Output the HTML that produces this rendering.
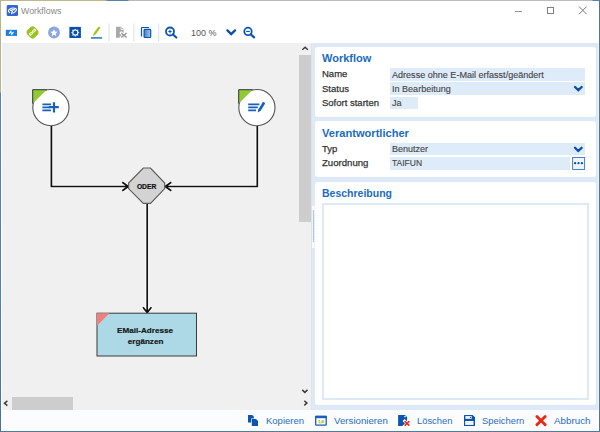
<!DOCTYPE html>
<html><head><meta charset="utf-8">
<style>
*{box-sizing:border-box;margin:0;padding:0}
html,body{width:600px;height:432px;overflow:hidden;background:#fff}
body{position:relative;font-family:"Liberation Sans",sans-serif;color:#333}
.abs{position:absolute}
.t{position:absolute;white-space:nowrap;line-height:1}
.lb{-webkit-text-stroke:0.25px currentColor}
.fv{-webkit-text-stroke:0.12px currentColor}
</style></head><body>

<!-- window borders -->
<div class="abs" style="left:0;top:0;width:600px;height:1px;background:linear-gradient(90deg,#bdb98f 0,#bdb98f 106px,#5b81a9 107px,#5b81a9 128px,#b9b9b9 129px,#bdbdbd 592px,#5b81a9 593px)"></div>
<div class="abs" style="left:0;top:0;width:1px;height:432px;background:linear-gradient(180deg,#b9b68e 0,#b6b48e 92px,#5c84ab 93px,#5580a8 300px,#4d7195 100%)"></div>
<div class="abs" style="left:598px;top:43px;width:1px;height:367px;background:#eef6fd"></div><div class="abs" style="left:599px;top:0;width:1px;height:432px;background:#517797"></div>
<div class="abs" style="left:0;top:431px;width:600px;height:1px;background:#55799a"></div>

<!-- title bar -->
<div class="abs" style="left:7px;top:5px;width:11px;height:11px;background:#3a64cf;border-radius:2px"></div>
<div class="t" style="left:21px;top:7.4px;font-size:8.8px;color:#8a8a8a">Workflows</div>
<div class="abs" style="left:514.8px;top:10.5px;width:7.4px;height:1.2px;background:#959595"></div>
<div class="abs" style="left:547px;top:7px;width:7px;height:7px;border:1px solid #808080"></div>

<!-- canvas -->
<div class="abs" style="left:2px;top:43px;width:310px;height:367px;background:#f0f0f0"></div>

<!-- canvas drawing -->
<svg class="abs" style="left:0;top:0" width="600" height="432" viewBox="0 0 600 432">
<g fill="none" stroke-linecap="butt" stroke-linejoin="miter">
 <g stroke="#fff" stroke-width="3.6" opacity="0.9">
  <path d="M51.4,125.5V186.5H128M122.3,182.2L128.3,186.5L122.3,190.8"/>
  <path d="M257.3,125.5V186.5H165M171.3,182.2L165.2,186.5L171.3,190.8"/>
  <path d="M147.2,203.5V312.5M143,307.2L147.2,312.6L151.4,307.2"/>
 </g>
 <g stroke="#111" stroke-width="1.7">
  <path d="M51.4,125.5V186.5H128M122.3,182.2L128.3,186.5L122.3,190.8"/>
  <path d="M257.3,125.5V186.5H165M171.3,182.2L165.2,186.5L171.3,190.8"/>
  <path d="M147.2,203.5V312.5M143,307.2L147.2,312.6L151.4,307.2"/>
 </g>
</g>
<!-- left circle -->
<circle cx="50.9" cy="107.6" r="18.1" fill="#fff" stroke="#555" stroke-width="1.1"/>
<path d="M32.7,89.7H46.8L32.7,103.6Z" fill="#8fca34"/>
<path d="M32.7,103.6V89.7H46.8" fill="none" stroke="#333" stroke-width="1"/>
<g stroke="#1760bd" fill="none">
 <path d="M42.4,104.3H51M42.4,107.3H49.5M42.4,110.4H51" stroke-width="1.7"/>
 <path d="M54,102.2V112.4M48.8,107.2H58.8" stroke-width="2.2"/>
</g>
<!-- right circle -->
<circle cx="256.9" cy="107.6" r="18.1" fill="#fff" stroke="#555" stroke-width="1.1"/>
<path d="M238.7,89.7H252.6L238.7,103.6Z" fill="#8fca34"/>
<path d="M238.7,103.6V89.7H252.6" fill="none" stroke="#333" stroke-width="1"/>
<g stroke="#1760bd" fill="none">
 <path d="M248.2,104.3H259.4M248.2,107.4H257.8M248.2,110.4H256" stroke-width="1.7"/>
</g>
<path d="M257.6,112.6L258.4,109.3L262.9,102.1Q264.2,101.9 265.1,103.5L260.7,110.7Z" fill="#1760bd"/>
<!-- octagon -->
<path d="M143.3,168H150.5L164.7,183V188.6L150.5,203.3H143.3L128.6,188.6V183Z" fill="#d3d3d3" stroke="#5e5e5e" stroke-width="1.2"/>
<text x="146.6" y="188.9" font-family="Liberation Sans" font-weight="bold" font-size="6.7" text-anchor="middle" fill="#111" stroke="#111" stroke-width="0.2">ODER</text>
<!-- rect -->
<rect x="97" y="313.2" width="99.5" height="42.8" fill="#add8e6" stroke="#3a3a3a" stroke-width="1"/>
<path d="M97,313.2H109.5L97,325.7Z" fill="#f08080"/>
<text x="145" y="333" font-family="Liberation Sans" font-weight="bold" font-size="8.1" text-anchor="middle" fill="#151515" stroke="#151515" stroke-width="0.18">EMail-Adresse</text>
<text x="145.6" y="343.8" font-family="Liberation Sans" font-weight="bold" font-size="8.1" text-anchor="middle" fill="#151515" stroke="#151515" stroke-width="0.18">ergänzen</text>
</svg>

<!-- v scrollbar thumb -->
<div class="abs" style="left:299px;top:55px;width:12px;height:166.6px;background:#cdcdcd"></div>
<div class="abs" style="left:311px;top:43px;width:1px;height:367px;background:#dde3e9"></div>
<!-- h scrollbar thumb -->
<div class="abs" style="left:12px;top:397px;width:61px;height:12.5px;background:#cdcdcd"></div>

<!-- right panel -->
<div class="abs" style="left:312px;top:43px;width:286px;height:367px;background:#dde9f7"></div>
<div class="abs" style="left:315px;top:47px;width:281px;height:69.6px;background:#fff;border-radius:3px"></div>
<div class="abs" style="left:315px;top:121px;width:281px;height:56px;background:#fff;border-radius:3px"></div>
<div class="abs" style="left:315px;top:182px;width:281px;height:223px;background:#fff;border-radius:3px"></div>

<div class="t" style="left:322px;top:53.2px;font-size:11px;font-weight:bold;color:#1b6cc0">Workflow</div>
<div class="t lb" style="left:322px;top:69.4px;font-size:9.5px;color:#333">Name</div>
<div class="t lb" style="left:322px;top:83.6px;font-size:9.5px;color:#333">Status</div>
<div class="t lb" style="left:322px;top:97.7px;font-size:9.5px;color:#333">Sofort starten</div>
<div class="abs" style="left:390px;top:68.1px;width:195px;height:12.5px;background:#deebf8"></div>
<div class="abs" style="left:390px;top:82.1px;width:195px;height:12.5px;background:#deebf8"></div>
<div class="abs" style="left:390px;top:96.9px;width:28px;height:12.1px;background:#deebf8"></div>
<div class="t fv" style="left:392px;top:70.8px;font-size:9.05px;color:#444">Adresse ohne E-Mail erfasst/geändert</div>
<div class="t fv" style="left:392px;top:84.8px;font-size:9.05px;color:#444">In Bearbeitung</div>
<div class="t fv" style="left:392px;top:98.9px;font-size:9.05px;color:#444">Ja</div>

<div class="t" style="left:322px;top:127.9px;font-size:11.1px;font-weight:bold;color:#1b6cc0">Verantwortlicher</div>
<div class="t lb" style="left:322px;top:144.4px;font-size:9.5px;color:#333">Typ</div>
<div class="t lb" style="left:322px;top:158.4px;font-size:9.6px;color:#333">Zuordnung</div>
<div class="abs" style="left:390px;top:143.1px;width:195px;height:12.3px;background:#deebf8"></div>
<div class="abs" style="left:390px;top:157px;width:180.3px;height:12.7px;background:#deebf8"></div>
<div class="t fv" style="left:392px;top:145px;font-size:9px;color:#444">Benutzer</div>
<div class="t fv" style="left:392px;top:158.9px;font-size:8.5px;color:#444">TAIFUN</div>

<div class="t" style="left:322px;top:187.6px;font-size:10.5px;font-weight:bold;color:#1b6cc0">Beschreibung</div>
<div class="abs" style="left:321.5px;top:203px;width:267.3px;height:197px;border:2px solid #dde9f7;background:#fff"></div>


<!-- scroll arrows, dropdowns, grip -->
<svg class="abs" style="left:0;top:0" width="600" height="432" viewBox="0 0 600 432">
 <g fill="none" stroke="#3c3c3c" stroke-width="1.5" stroke-linejoin="miter">
  <path d="M302.4,49.8L305.1,47.2L307.8,49.8"/>
  <path d="M302.3,389.9L304.8,392.4L307.5,389.9"/>
  <path d="M304.3,400.8L306.9,403.1L304.3,405.4"/>
  <path d="M7.4,400.8L4.5,403.2L7.4,405.6"/>
 </g>
 <rect x="312.2" y="206" width="2.2" height="42" fill="#fff"/>
 <g fill="#4a80c8">
  <rect x="312.9" y="210.6" width="1" height="1"/><rect x="312.9" y="212.6" width="1" height="1"/>
  <rect x="312.9" y="214.6" width="1" height="1"/><rect x="312.9" y="216.6" width="1" height="1"/>
  <rect x="312.9" y="218.6" width="1" height="1"/><rect x="312.9" y="220.6" width="1" height="1"/>
  <rect x="312.9" y="222.6" width="1" height="1"/><rect x="312.9" y="224.6" width="1" height="1"/>
  <rect x="312.9" y="226.6" width="1" height="1"/><rect x="312.9" y="228.6" width="1" height="1"/>
  <rect x="312.9" y="230.6" width="1" height="1"/><rect x="312.9" y="232.6" width="1" height="1"/>
  <rect x="312.9" y="234.6" width="1" height="1"/><rect x="312.9" y="236.6" width="1" height="1"/>
  <rect x="312.9" y="238.6" width="1" height="1"/><rect x="312.9" y="240.6" width="1" height="1"/>
 </g>
 <g fill="none" stroke="#0a4fa6" stroke-width="2.3" stroke-linecap="round">
  <path d="M575,87L578.3,90.2L581.7,87"/>
  <path d="M575,147.8L578.2,151L581.6,147.8"/>
 </g>
 <rect x="572.6" y="157.5" width="12" height="12" fill="#edf4fc" stroke="#3f7cc6" stroke-width="0.95"/>
 <g fill="#0a4fa6"><circle cx="575.1" cy="163.2" r="1.15"/><circle cx="578.5" cy="163.2" r="1.15"/><circle cx="581.9" cy="163.2" r="1.15"/></g>
</svg>

<!-- bottom bar -->
<div class="abs" style="left:1px;top:410px;width:597px;height:21px;background:#fbfcfe"></div>
<!-- toolbar & title icons -->
<svg class="abs" style="left:0;top:0" width="600" height="45" viewBox="0 0 600 45">
 <!-- app icon -->
 <rect x="6.7" y="4.9" width="11.3" height="11.1" rx="1.6" fill="#3566d0"/>
 <g fill="none" stroke="#fff" stroke-linecap="round">
  <path d="M9.6,12.6C7.6,11.6 8.2,9 11.6,8.2C14.6,7.6 17.2,8.6 16.2,10.6C15.6,11.8 14.4,12.6 13.2,13" stroke-width="1.15"/>
  <path d="M10.6,10.4L14.4,9.6M12.6,10L11.7,13.6" stroke-width="1.3"/>
 </g>
 <!-- close X -->
 <path d="M579,6.6L586.6,14.2M586.6,6.6L579,14.2" stroke="#777" stroke-width="1"/>

 <!-- icon1 blue pulse -->
 <rect x="5.8" y="29.8" width="11.2" height="6.1" fill="#1a80e0"/>
 <path d="M9.4,33.4L11.1,31.2M11.5,34.6L13.2,32.3M10.6,32.6L12,33.2" fill="none" stroke="#fff" stroke-width="1.1" stroke-linecap="round"/>
 <!-- icon2 green diamond -->
 <path d="M31.2,27.2Q32.55,26.3 33.9,27.2L37.6,30.9Q38.5,32.4 37.6,33.9L33.9,37.6Q32.55,38.5 31.2,37.6L27.5,33.9Q26.6,32.4 27.5,30.9Z" fill="#9bc220" stroke="#9bc220" stroke-width="1.2" stroke-linejoin="round"/>
 <g fill="none" stroke="#fff" stroke-width="1">
  <rect x="30.1" y="32" width="1.8" height="3.4" rx="0.9" transform="rotate(45 31 33.7)"/>
  <rect x="33.1" y="29.1" width="1.8" height="3.4" rx="0.9" transform="rotate(45 34 30.8)"/>
 </g>
 <!-- icon3 star circle -->
 <circle cx="54" cy="32.5" r="5.9" fill="#89a6de"/>
 <path d="M54.00,29.00L55.03,31.58L57.80,31.76L55.66,33.54L56.35,36.24L54.00,34.75L51.65,36.24L52.34,33.54L50.20,31.76L52.97,31.58Z" fill="#fff"/>
 <!-- icon4 gear -->
 <rect x="69.4" y="26.9" width="11.5" height="11.1" fill="#0a4fa8"/>
 <circle cx="75.3" cy="32.6" r="2.55" fill="none" stroke="#fff" stroke-width="1.1"/>
 <g fill="#fff"><circle cx="78.65" cy="32.60" r="0.62"/><circle cx="77.67" cy="34.97" r="0.62"/><circle cx="75.30" cy="35.95" r="0.62"/><circle cx="72.93" cy="34.97" r="0.62"/><circle cx="71.95" cy="32.60" r="0.62"/><circle cx="72.93" cy="30.23" r="0.62"/><circle cx="75.30" cy="29.25" r="0.62"/><circle cx="77.67" cy="30.23" r="0.62"/></g>
 <!-- icon5 pencil -->
 <path d="M92.8,36.3L93.7,33.2L98.1,27.0Q99.4,26.4 100.4,27.7L96.1,34.0Z" fill="#a5c816"/>
 <rect x="90.9" y="37" width="11.1" height="1.8" fill="#4a88d0"/>
 <!-- separators -->
 <rect x="108.4" y="23.5" width="1.3" height="18.2" fill="#e1e8f0"/>
 <rect x="133.2" y="23.5" width="1.3" height="18.2" fill="#e1e8f0"/>
 <rect x="158" y="23.5" width="1.3" height="18.2" fill="#e1e8f0"/>
 <!-- icon6 disabled doc -->
 <path d="M116,26.8H121.2L123.6,29.3V37.8H116Z" fill="#a9a9a9"/>
 <path d="M121,26.8V29.5H123.8" fill="none" stroke="#fff" stroke-width="0.7"/>
 <path d="M120.2,32.2L127.5,38.2M127.5,32.2L120.2,38.2" stroke="#fff" stroke-width="2.8"/>
 <path d="M121.2,33L126.6,37.4M126.6,33L121.2,37.4" stroke="#9a9a9a" stroke-width="1.4"/>
 <!-- icon7 copy -->
 <path d="M149,27.5H142.2Q141.5,27.5 141.5,28.2V36.6" fill="none" stroke="#0a55b0" stroke-width="1.2"/>
 <defs><linearGradient id="cg" x1="0" x2="1"><stop offset="0" stop-color="#3f7fc8"/><stop offset="1" stop-color="#a9c6ea"/></linearGradient></defs>
 <rect x="144.1" y="29.4" width="6.6" height="8.1" rx="0.8" fill="url(#cg)" stroke="#0a55b0" stroke-width="1.2"/>
 <!-- zoom in -->
 <circle cx="170" cy="31.5" r="4" fill="none" stroke="#0b55ad" stroke-width="1.8"/>
 <path d="M168.3,31.5H171.7M170,29.8V33.2" stroke="#0b55ad" stroke-width="1.1"/>
 <path d="M173,34.5L176.3,37.5" stroke="#0b55ad" stroke-width="2.2" stroke-linecap="round"/>
 <!-- chevron -->
 <path d="M227.4,30.4L231.2,34.1L235,30.4" fill="none" stroke="#0a4fa6" stroke-width="2.3" stroke-linecap="round"/>
 <!-- zoom out -->
 <circle cx="248" cy="31.4" r="3.7" fill="none" stroke="#0b55ad" stroke-width="1.8"/>
 <path d="M246.2,31.4H249.8" stroke="#0b55ad" stroke-width="1.2"/>
 <path d="M250.8,34.4L254.1,37.3" stroke="#0b55ad" stroke-width="2.2" stroke-linecap="round"/>
</svg>
<div class="t" style="left:191px;top:28.6px;font-size:9px;color:#555">100 %</div>

<!-- bottom icons -->
<svg class="abs" style="left:0;top:405px" width="600" height="27" viewBox="0 405 600 27">
 <!-- kopieren -->
 <path d="M248,414.9H252.2L253.8,416.5V422.4H248Z" fill="#0a55b0"/>
 <path d="M251.2,418.4H255.8L258.6,421.2V426.6H251.2Z" fill="#fff"/>
 <path d="M251.8,418.9H256L258,420.9V426H251.8Z" fill="#0a55b0"/>
 <!-- versionieren -->
 <rect x="315.7" y="416.4" width="10.5" height="8.8" rx="0.6" fill="#fff" stroke="#1a5cb8" stroke-width="1.3"/>
 <rect x="315.1" y="415.8" width="11.7" height="2.4" fill="#1a5cb8"/>
 <text x="321" y="423.2" font-family="Liberation Sans" font-weight="bold" font-size="4.4" text-anchor="middle" fill="#a8c81c" stroke="#a8c81c" stroke-width="0.25">1.0</text>
 <!-- loeschen -->
 <path d="M398.1,414.9H405L407.1,417V426H398.1Z" fill="#0d56b0"/>
 <circle cx="405" cy="416.6" r="0.8" fill="#fff"/>
 <path d="M403.6,420L410.6,426.8M410.6,420L403.6,426.8" stroke="#fff" stroke-width="3"/>
 <path d="M404.6,421.2L409.4,425.6M409.4,421.2L404.6,425.6" stroke="#e53020" stroke-width="1.6"/>
 <!-- speichern -->
 <path d="M464,415.4Q464,414.9 464.5,414.9H472.6L475,417.3V425.5Q475,426 474.5,426H464.5Q464,426 464,425.5Z" fill="#0d56b0"/>
 <rect x="465.4" y="416.1" width="6.3" height="2.7" fill="#fff"/>
 <circle cx="470.5" cy="417.4" r="0.7" fill="#0d56b0"/>
 <rect x="465.2" y="421" width="8.3" height="3.9" fill="#fff"/>
 <rect x="466.2" y="422.4" width="6.3" height="0.8" fill="#dbe6f3"/>
 <!-- abbruch -->
 <path d="M536.9,416.5L545.2,424.8M545.2,416.5L536.9,424.8" stroke="#e52a17" stroke-width="2.9" stroke-linecap="round"/>
</svg>

<div class="t" style="left:266px;top:416px;font-size:9.5px;color:#2a6ec0">Kopieren</div>
<div class="t" style="left:334px;top:416px;font-size:9.7px;color:#2a6ec0">Versionieren</div>
<div class="t" style="left:417px;top:416px;font-size:9.4px;color:#2a6ec0">Löschen</div>
<div class="t" style="left:482px;top:416px;font-size:9.4px;color:#2a6ec0">Speichern</div>
<div class="t" style="left:554px;top:416px;font-size:9.8px;color:#2a6ec0">Abbruch</div>

</body></html>
